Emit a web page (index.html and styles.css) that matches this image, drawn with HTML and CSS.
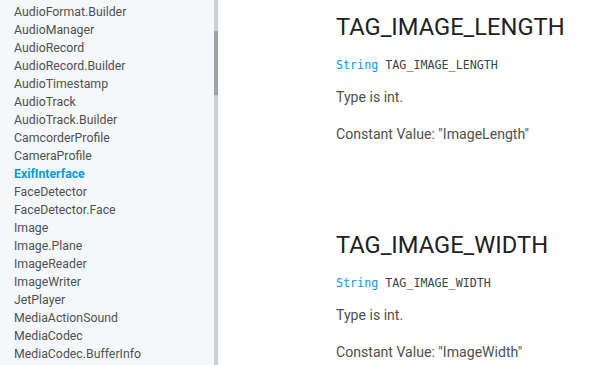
FILE: index.html
```html
<!DOCTYPE html>
<html lang="en">
<head>
    <meta charset="UTF-8">
    <title>ExifInterface</title>
    <link rel="stylesheet" href="styles.css">
</head>
<body>
    <div id="page">
        <div id="sidebar">
            <ul class="nav-list">
                <li>AudioFormat.Builder</li>
                <li>AudioManager</li>
                <li>AudioRecord</li>
                <li>AudioRecord.Builder</li>
                <li>AudioTimestamp</li>
                <li>AudioTrack</li>
                <li>AudioTrack.Builder</li>
                <li>CamcorderProfile</li>
                <li>CameraProfile</li>
                <li class="selected">ExifInterface</li>
                <li>FaceDetector</li>
                <li>FaceDetector.Face</li>
                <li>Image</li>
                <li>Image.Plane</li>
                <li>ImageReader</li>
                <li>ImageWriter</li>
                <li>JetPlayer</li>
                <li>MediaActionSound</li>
                <li>MediaCodec</li>
                <li>MediaCodec.BufferInfo</li>
            </ul>
            <div class="scroll-track">
                <div class="scroll-thumb"></div>
            </div>
        </div>
        <div id="content">
            <div class="api-item">
                <h3 class="api-name">TAG_IMAGE_LENGTH</h3>
                <p class="api-signature"><span class="type">String</span> TAG_IMAGE_LENGTH</p>
                <p class="api-text">Type is int.</p>
                <p class="api-text">Constant Value: "ImageLength"</p>
            </div>
            <div class="api-item">
                <h3 class="api-name">TAG_IMAGE_WIDTH</h3>
                <p class="api-signature"><span class="type">String</span> TAG_IMAGE_WIDTH</p>
                <p class="api-text">Type is int.</p>
                <p class="api-text">Constant Value: "ImageWidth"</p>
            </div>
        </div>
    </div>
</body>
</html>
```

FILE: styles.css
```css
body {
    font-family: Roboto, 'Liberation Sans', sans-serif;
    background-color: #fff;
    margin: 0;
    height: 365px;
    overflow: hidden;
}
#page {
    display: flex;
    height: 365px;
}
#sidebar {
    display: flex;
    width: 219px;
    background-color: #f5f8fa;
    flex-shrink: 0;
}
.nav-list {
    list-style: none;
    margin: 0;
    padding: 3px 0 0 14px;
    flex: 1;
}
.nav-list li {
    font-size: 12.3px;
    line-height: 18px;
    height: 18px;
    color: #505050;
    white-space: nowrap;
}
.nav-list li.selected {
    color: #039be5;
    font-weight: bold;
}
.scroll-track {
    width: 4px;
    margin-right: 1px;
    background-color: #c8d1d7;
    padding-top: 31px;
}
.scroll-thumb {
    height: 64px;
    background-color: #9ba5a7;
}
#content {
    padding-left: 117px;
    flex: 1;
}
.api-item {
    margin-bottom: 86px;
}
.api-name {
    font-size: 23.7px;
    font-weight: 400;
    color: #212121;
    margin: 12px 0 0 0;
    line-height: 30px;
}
.api-signature {
    font-family: 'DejaVu Sans Mono', 'Liberation Mono', monospace;
    font-size: 11.7px;
    color: #37474f;
    margin: 15px 0 0 0;
    line-height: 16px;
}
.api-signature .type {
    color: #039be5;
}
.api-text {
    font-size: 14.1px;
    color: #505050;
    margin: 14px 0 0 0;
    line-height: 20px;
}
.api-text + .api-text {
    margin-top: 17px;
}
```
